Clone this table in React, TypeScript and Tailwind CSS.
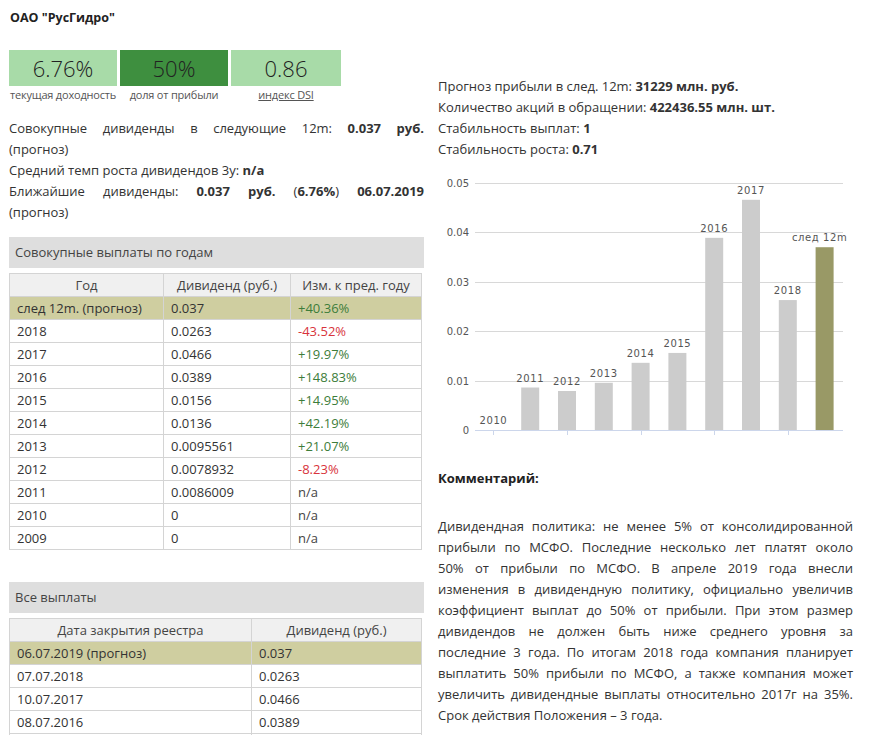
import React from "react"

type YearRow = { year: string; value: string; change: string; tone: "up" | "down" | "na"; forecast?: boolean }

const yearRows: YearRow[] = [
  { year: "след 12m. (прогноз)", value: "0.037", change: "+40.36%", tone: "up", forecast: true },
  { year: "2018", value: "0.0263", change: "-43.52%", tone: "down" },
  { year: "2017", value: "0.0466", change: "+19.97%", tone: "up" },
  { year: "2016", value: "0.0389", change: "+148.83%", tone: "up" },
  { year: "2015", value: "0.0156", change: "+14.95%", tone: "up" },
  { year: "2014", value: "0.0136", change: "+42.19%", tone: "up" },
  { year: "2013", value: "0.0095561", change: "+21.07%", tone: "up" },
  { year: "2012", value: "0.0078932", change: "-8.23%", tone: "down" },
  { year: "2011", value: "0.0086009", change: "n/a", tone: "na" },
  { year: "2010", value: "0", change: "n/a", tone: "na" },
  { year: "2009", value: "0", change: "n/a", tone: "na" },
]

const payments = [
  { date: "06.07.2019 (прогноз)", value: "0.037", forecast: true },
  { date: "07.07.2018", value: "0.0263" },
  { date: "10.07.2017", value: "0.0466" },
  { date: "08.07.2016", value: "0.0389" },
]

const bars = [
  { label: "2010", v: 0 },
  { label: "2011", v: 0.0086009 },
  { label: "2012", v: 0.0078932 },
  { label: "2013", v: 0.0095561 },
  { label: "2014", v: 0.0136 },
  { label: "2015", v: 0.0156 },
  { label: "2016", v: 0.0389 },
  { label: "2017", v: 0.0466 },
  { label: "2018", v: 0.0263 },
  { label: "след 12m", v: 0.037, forecast: true },
]

const comment = [
  "Дивидендная политика: не менее 5% от консолидированной",
  "прибыли по МСФО. Последние несколько лет платят около",
  "50% от прибыли по МСФО. В апреле 2019 года внесли",
  "изменения в дивидендную политику, официально увеличив",
  "коэффициент выплат до 50% от прибыли. При этом размер",
  "дивидендов не должен быть ниже среднего уровня за",
  "последние 3 года. По итогам 2018 года компания планирует",
  "выплатить 50% прибыли по МСФО, а также компания может",
  "увеличить дивидендные выплаты относительно 2017г на 35%.",
]

function Justified({ children }: { children: React.ReactNode }) {
  return <div className="text-justify [text-align-last:justify]">{children}</div>
}

function StatBox({ value, label, dark, link }: { value: string; label: string; dark?: boolean; link?: boolean }) {
  return (
    <div className={link ? "w-[110px]" : "w-[108px]"}>
      <div
        className={`flex h-[36px] items-center justify-center text-[22px] font-light text-[#222] ${
          dark ? "bg-[#3e8f3f]" : "bg-[#a8dba8]"
        }`}
      >
        {value}
      </div>
      <div
        className={`mt-[1px] whitespace-nowrap text-center text-[11px] leading-[16px] tracking-[-0.2px] text-[#555] ${
          link ? "underline" : ""
        }`}
      >
        {label}
      </div>
    </div>
  )
}

function SectionHeader({ title }: { title: string }) {
  return <div className="flex h-[31px] items-center bg-[#dedede] pl-[6px] text-[13px] text-[#444]">{title}</div>
}

const changeColor = { up: "text-[#3d7d3a]", down: "text-[#d8343c]", na: "text-[#444]" }

function Chart() {
  const base = 259
  const scale = 4940
  const band = 36.8
  const left = 37
  const ticks = [0, 0.01, 0.02, 0.03, 0.04, 0.05]
  return (
    <svg width="415" height="272" className="block">
      {ticks.map((t) => {
        const y = Math.round(base - t * scale) + 0.5
        return (
          <g key={t}>
            <line x1={left} x2={405} y1={y} y2={y} stroke={t === 0 ? "#ccd6eb" : "#d8d8d8"} strokeWidth="1" />
            <text x={31} y={y + 3.5} textAnchor="end" fontSize="10" fill="#555" fontFamily="DejaVu Sans, sans-serif">
              {t === 0 ? "0" : t.toFixed(2)}
            </text>
          </g>
        )
      })}
      {[0, 2, 4, 6, 8].map((i) => {
        const x = Math.round(left + band * (i + 0.5)) + 0.5
        return <line key={i} x1={x} x2={x} y1={base + 0.5} y2={base + 5} stroke="#ccd6eb" />
      })}
      {bars.map((b, i) => {
        const cx = left + band * (i + 0.5)
        const h = b.v * scale
        return (
          <g key={b.label}>
            <rect x={cx - 9} y={base - h} width={18} height={h} fill={b.forecast ? "#999966" : "#cccccc"} />
            <text
              x={b.forecast ? cx - 5 : cx}
              y={base - h - 6}
              textAnchor="middle"
              fontSize="10"
              letterSpacing="0.6"
              fill="#555"
              fontFamily="DejaVu Sans, sans-serif"
            >
              {b.label}
            </text>
          </g>
        )
      })}
    </svg>
  )
}

export default function App() {
  return (
    <div className="flex gap-[14px] bg-white px-[9px] font-['Open_Sans','DejaVu_Sans',sans-serif] text-[#333]">
      <div className="w-[415px] shrink-0">
        <h1 className="pl-[1px] pt-[9px] text-[12.5px] font-bold leading-[17px] text-[#222]">ОАО "РусГидро"</h1>
        <div className="mt-[24px] flex gap-[3px]">
          <StatBox value="6.76%" label="текущая доходность" />
          <StatBox value="50%" label="доля от прибыли" dark />
          <StatBox value="0.86" label="индекс DSI" link />
        </div>
        <div className="mt-[15px] text-[13px] leading-[21px]">
          <Justified>
            Совокупные дивиденды в следующие 12m: <b>0.037 руб.</b>
          </Justified>
          <div>(прогноз)</div>
          <div>
            Средний темп роста дивидендов 3y: <b>n/a</b>
          </div>
          <Justified>
            Ближайшие дивиденды: <b>0.037 руб.</b> (<b>6.76%</b>) <b>06.07.2019</b>
          </Justified>
          <div>(прогноз)</div>
        </div>

        <div className="mt-[14px]">
          <SectionHeader title="Совокупные выплаты по годам" />
          <table className="mt-[5px] w-[413px] border-collapse text-[13px] leading-[22px]">
            <thead>
              <tr className="bg-[#f0f0f0] text-[#444]">
                <th className="w-[154px] border border-[#d4d4d4] font-normal">Год</th>
                <th className="w-[127px] border border-[#d4d4d4] font-normal">Дивиденд (руб.)</th>
                <th className="border border-[#d4d4d4] font-normal">Изм. к пред. году</th>
              </tr>
            </thead>
            <tbody>
              {yearRows.map((r) => (
                <tr key={r.year} className={r.forecast ? "bg-[#cfcea0]" : ""}>
                  <td className="border border-[#d4d4d4] pl-[7px]">{r.year}</td>
                  <td className="border border-[#d4d4d4] pl-[7px]">{r.value}</td>
                  <td className={`border border-[#d4d4d4] pl-[7px] ${changeColor[r.tone]}`}>{r.change}</td>
                </tr>
              ))}
            </tbody>
          </table>
        </div>

        <div className="mt-[32px]">
          <SectionHeader title="Все выплаты" />
          <table className="mt-[5px] w-[413px] border-collapse text-[13px] leading-[22px]">
            <thead>
              <tr className="bg-[#f0f0f0] text-[#444]">
                <th className="w-[242px] border border-[#d4d4d4] font-normal">Дата закрытия реестра</th>
                <th className="border border-[#d4d4d4] font-normal">Дивиденд (руб.)</th>
              </tr>
            </thead>
            <tbody>
              {payments.map((p) => (
                <tr key={p.date} className={p.forecast ? "bg-[#cfcea0]" : ""}>
                  <td className="border border-[#d4d4d4] pl-[7px]">{p.date}</td>
                  <td className="border border-[#d4d4d4] pl-[7px]">{p.value}</td>
                </tr>
              ))}
              <tr>
                <td className="border border-[#d4d4d4] pl-[7px]">&nbsp;</td>
                <td className="border border-[#d4d4d4] pl-[7px]">&nbsp;</td>
              </tr>
            </tbody>
          </table>
        </div>
      </div>

      <div className="w-[415px] shrink-0 pt-[76px]">
        <div className="text-[13px] leading-[21px]">
          <div>
            Прогноз прибыли в след. 12m: <b>31229 млн. руб.</b>
          </div>
          <div>
            Количество акций в обращении: <b>422436.55 млн. шт.</b>
          </div>
          <div>
            Стабильность выплат: <b>1</b>
          </div>
          <div>
            Стабильность роста: <b>0.71</b>
          </div>
        </div>
        <div className="mt-[11px]">
          <Chart />
        </div>
        <div className="mt-[25px] text-[13px] font-bold leading-[20px] text-[#222]">Комментарий:</div>
        <div className="mt-[28px] text-[13px] leading-[21px]">
          {comment.map((line) => (
            <Justified key={line}>{line}</Justified>
          ))}
          <div>Срок действия Положения – 3 года.</div>
        </div>
      </div>
    </div>
  )
}
